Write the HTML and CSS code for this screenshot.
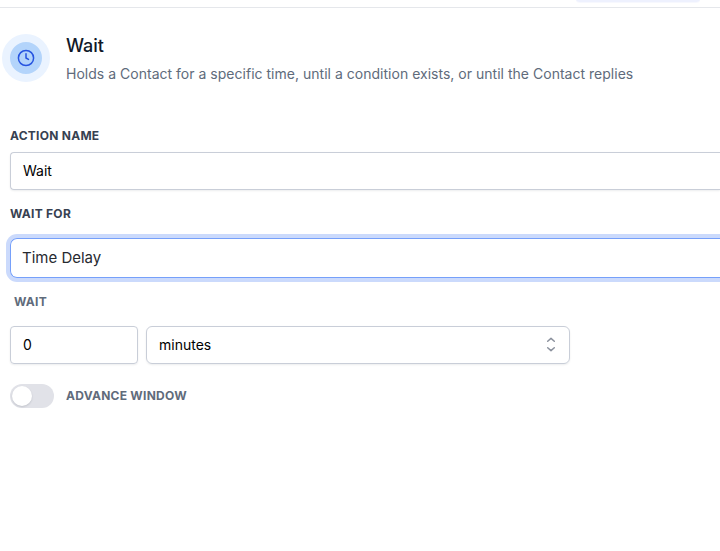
FILE: index.html
```html
<!DOCTYPE html>
<html lang="en">
<head>
<meta charset="utf-8">
<title>Wait</title>
<link rel="stylesheet" href="styles.css">
</head>
<body>
<div class="topbar"><div class="tab"></div></div>
<header class="header">
  <div class="badge">
    <svg width="18" height="18" viewBox="0 0 18 18" fill="none" stroke="currentColor" stroke-width="1.5" stroke-linecap="round" stroke-linejoin="round"><circle cx="9" cy="9" r="7.6"/><path d="M9 4.7V9l2.5 1.4"/></svg>
  </div>
  <div class="heading">
    <h1 class="title">Wait</h1>
    <p class="description">Holds a Contact for a specific time, until a condition exists, or until the Contact replies</p>
  </div>
</header>
<main class="form">
  <label class="label label-name">Action Name</label>
  <div class="input wide">Wait</div>
  <label class="label label-for">Wait For</label>
  <div class="input wide focused">Time Delay</div>
  <label class="label muted label-wait">Wait</label>
  <div class="row">
    <div class="input amount">0</div>
    <div class="input unit">
      <span>minutes</span>
      <svg width="12" height="16" viewBox="0 0 12 16" fill="none" stroke="currentColor" stroke-width="1.5" stroke-linecap="round" stroke-linejoin="round"><path d="M2.7 5.3 6 2.4l3.3 2.9M2.7 11.7 6 14.6l3.3-2.9"/></svg>
    </div>
  </div>
  <div class="toggle-row">
    <div class="switch"><div class="knob"></div></div>
    <span class="label muted">Advance Window</span>
  </div>
</main>
</body>
</html>
```
FILE: styles.css
```css
* { box-sizing: border-box; }
body {
  margin: 0;
  height: 551px;
  overflow: hidden;
  background: #fff;
  color: #000;
  font-family: Inter, "Liberation Sans", sans-serif;
}
.topbar {
  height: 8px;
  border-bottom: 1px solid #e5e7eb;
  padding-left: 576px;
}
.tab {
  width: 124px;
  height: 2px;
  background: #eef1fe;
  border-radius: 0 0 6px 6px / 0 0 2px 2px;
  box-shadow: 0 1px 1px #f7f8fe;
}
.header {
  display: flex;
  height: 121px;
  padding: 26px 0 0 2px;
}
.badge {
  display: flex;
  align-items: center;
  justify-content: center;
  width: 48px;
  height: 48px;
  border: 8px solid #eaf3ff;
  border-radius: 50%;
  background: #b3d4fb;
  color: #2654e0;
}
.heading { margin-left: 16px; }
.title {
  margin: -2px 0 0;
  font-size: 18px;
  line-height: 28px;
  font-weight: 500;
  color: #101828;
}
.description {
  margin: 4px 0 0;
  font-size: 14px;
  line-height: 20px;
  letter-spacing: .017px;
  color: #606b7b;
  white-space: nowrap;
}
.form { padding-left: 10px; }
.label {
  display: block;
  font-size: 12px;
  line-height: 14px;
  font-weight: 700;
  letter-spacing: .26px;
  color: #374151;
  text-transform: uppercase;
  white-space: nowrap;
}
.muted { color: #606b7b; }
.input {
  display: flex;
  align-items: center;
  height: 38px;
  padding: 0 12px 2px;
  border: 1px solid #c9ced8;
  border-radius: 4px;
  box-shadow: 0 1px 2px rgba(16, 24, 40, .08);
  font-size: 14px;
}
.label-name { margin-bottom: 9px; }
.label-for { margin: 17px 0; }
.focused {
  height: 40px;
  padding-left: 11px;
  border-color: #76a0fa;
  border-radius: 7px;
  box-shadow: 0 0 0 4px #cbdafc;
  font-size: 15px;
  color: #272a30;
}
.wide {
  border-right: 0;
  border-top-right-radius: 0;
  border-bottom-right-radius: 0;
}
.label-wait { margin: 17px 0 17px 4px; }
.row { display: flex; gap: 8px; }
.amount { width: 128px; }
.unit {
  width: 424px;
  justify-content: space-between;
  border-radius: 6px;
}
.unit svg { color: #8b919d; }
.toggle-row {
  display: flex;
  align-items: center;
  gap: 12px;
  margin-top: 20px;
}
.switch {
  width: 44px;
  height: 24px;
  padding: 2px;
  border-radius: 12px;
  background: #e1e2e8;
}
.knob {
  width: 20px;
  height: 20px;
  border-radius: 50%;
  background: #fff;
  box-shadow: 0 1px 2px rgba(16, 24, 40, .15);
}
```
